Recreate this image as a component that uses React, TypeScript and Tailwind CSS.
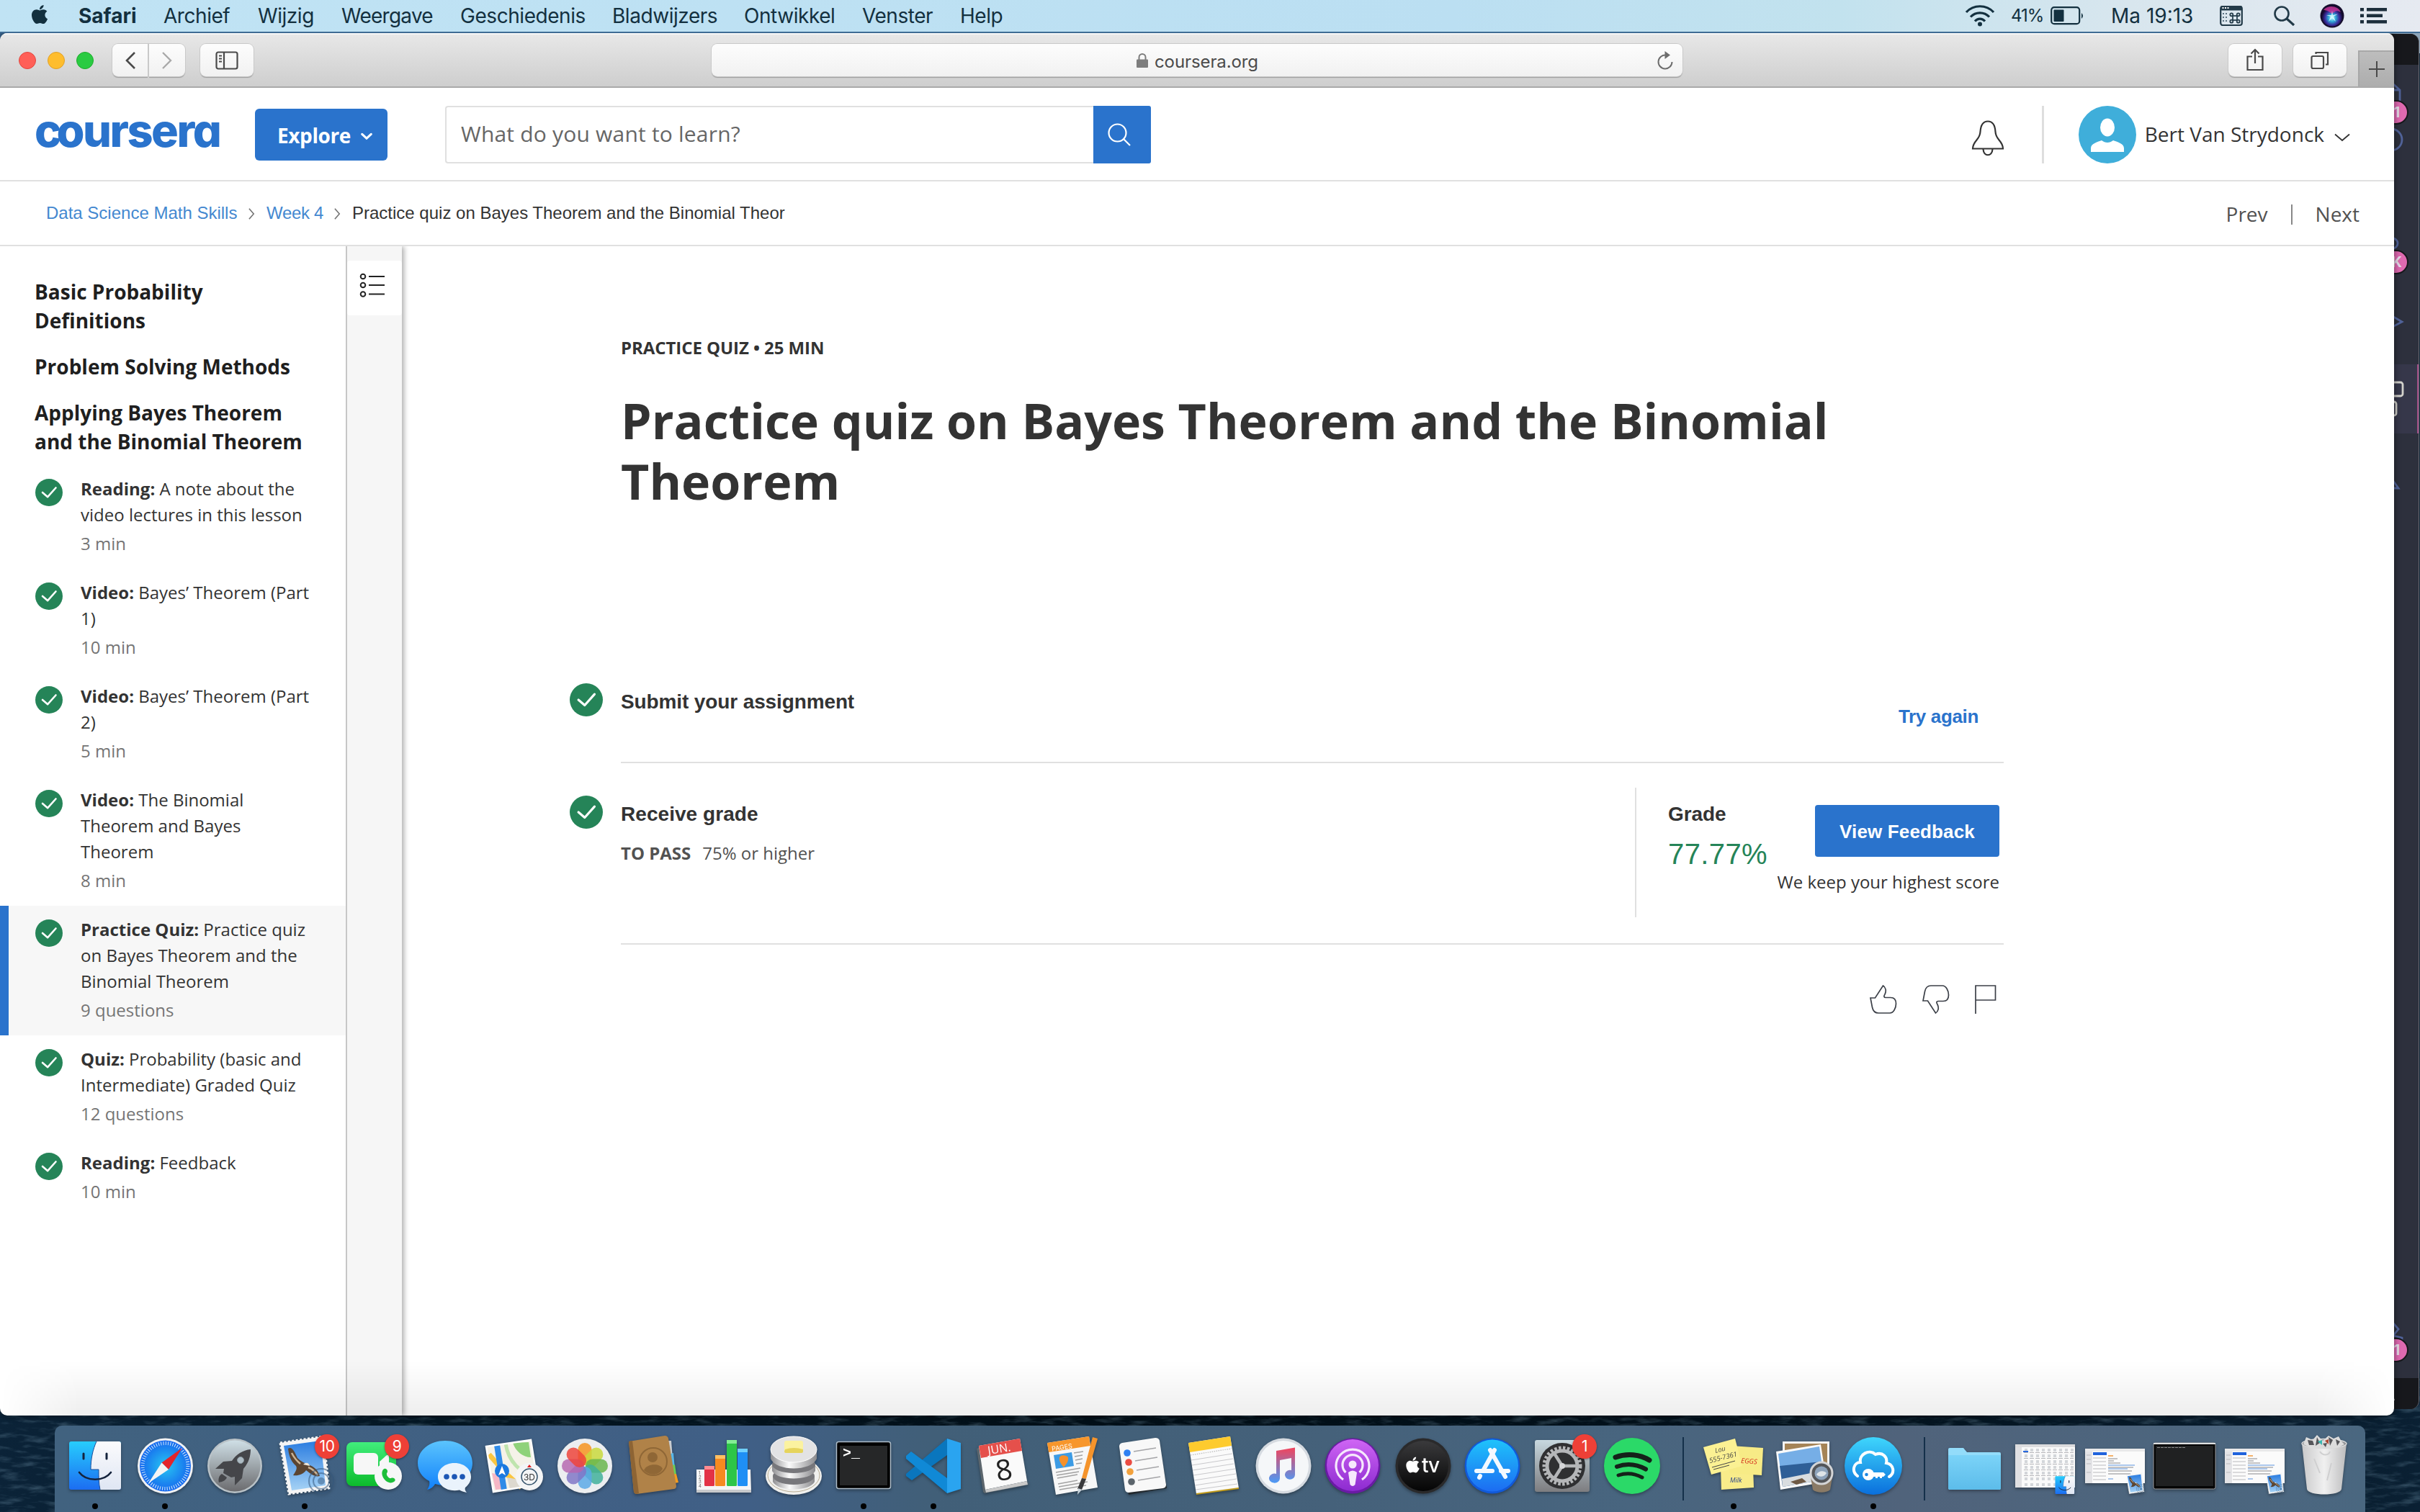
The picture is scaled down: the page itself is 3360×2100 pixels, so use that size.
import type { ReactNode } from "react";
import { FaApple } from "react-icons/fa";

const OS = "font-['Open_Sans',sans-serif]";
const HV = "font-['Liberation_Sans',Arial,sans-serif]";
const UI = "font-['Inter',sans-serif]";

/* ---------- menu bar ---------- */

const menus: [string, string][] = [
  ["Safari", "w-[118px] font-bold"],
  ["Archief", "w-[131px] tracking-[-0.45px]"],
  ["Wijzig", "w-[116px] tracking-[-0.45px]"],
  ["Weergave", "w-[165px] tracking-[-0.75px]"],
  ["Geschiedenis", "w-[211px] tracking-[-0.45px]"],
  ["Bladwijzers", "w-[183px] tracking-[-0.45px]"],
  ["Ontwikkel", "w-[164px] tracking-[-0.45px]"],
  ["Venster", "w-[136px] tracking-[-0.45px]"],
  ["Help", "w-[80px] tracking-[-0.45px]"],
];

function MenuBar() {
  return (
    <div className={`relative z-20 flex h-[46px] shrink-0 items-center border-b-2 border-[#3f6c94] bg-[linear-gradient(90deg,#c0e3f4_0%,#bbdff2_60%,#c2e2ee_76%,#d8e6ee_88%,#e6eaf1_100%)] text-[28px] leading-[44px] text-[#13303f] ${UI}`}>
      <FaApple className="ml-[40px] size-[30px] -translate-y-[2px]" />
      <div className="ml-[39px] flex">
        {menus.map(([t, c]) => (
          <span key={t} className={c}>{t}</span>
        ))}
      </div>
      <svg viewBox="0 0 42 30" className="ml-auto h-[30px] w-[42px]" fill="none" stroke="#13303f" strokeWidth="3.2">
        <path d="M2 10 C12 -1 30 -1 40 10" />
        <path d="M8 16.5 C15 9 27 9 34 16.5" />
        <path d="M14 22.5 C18 18 24 18 28 22.5" />
        <circle cx="21" cy="26.5" r="3" fill="#13303f" stroke="none" />
      </svg>
      <span className="ml-[22px] w-[55px] text-[24px] tracking-[-1px]">41%</span>
      <svg viewBox="0 0 48 26" className="h-[26px] w-[48px]" fill="none">
        <rect x="1.2" y="1.2" width="39" height="23" rx="4" stroke="#13303f" strokeWidth="2.2" />
        <rect x="4.5" y="4.5" width="14" height="16.5" rx="1" fill="#13303f" />
        <path d="M43 9 Q47 13 43 17Z" fill="#13303f" />
      </svg>
      <span className="ml-[36px] w-[116px] whitespace-nowrap">Ma 19:13</span>
      <svg viewBox="0 0 32 30" className="ml-[35px] h-[30px] w-[32px]">
        <rect x="1.2" y="2" width="29.6" height="26" rx="3" fill="none" stroke="#223a48" strokeWidth="2.2" />
        <rect x="1" y="1" width="30" height="6.5" rx="2" fill="#223a48" />
        <g fill="#fff"><rect x="3.5" y="3" width="2" height="2" /><rect x="7" y="3" width="2" height="2" /><rect x="10.500" y="3" width="2" height="2" /></g>
        <g fill="none" stroke="#223a48" strokeWidth="1.7">
          <rect x="18" y="15" width="6" height="6" />
          <circle cx="16.300" cy="13.300" r="2" /><circle cx="25.700" cy="13.300" r="2" /><circle cx="16.300" cy="22.700" r="2" /><circle cx="25.700" cy="22.700" r="2" />
        </g>
        <g fill="#5a7180"><rect x="4" y="11" width="2" height="2" /><rect x="8" y="11" width="2" height="2" /><rect x="4" y="16" width="2" height="2" /><rect x="8" y="16" width="2" height="2" /><rect x="4" y="21" width="2" height="2" /><rect x="8" y="21" width="2" height="2" /></g>
      </svg>
      <svg viewBox="0 0 30 28" className="ml-[43px] h-[28px] w-[30px]" fill="none" stroke="#223a48" strokeWidth="2.6">
        <circle cx="11" cy="11" r="9.500" /><path d="M18 18 L28 27" strokeWidth="3.2" />
      </svg>
      <svg viewBox="0 0 34 34" className="ml-[34px] h-[34px] w-[34px]">
        <defs>
          <radialGradient id="siri" cx=".5" cy=".6" r=".5"><stop offset="0" stopColor="#c9fbff" /><stop offset=".35" stopColor="#2fa9d8" /><stop offset=".7" stopColor="#3a2a9a" /><stop offset="1" stopColor="#120a2e" /></radialGradient>
        </defs>
        <circle cx="17" cy="17" r="16.500" fill="#150d2c" />
        <circle cx="17" cy="17" r="14.500" fill="url(#siri)" />
        <path d="M5 9 C11 1 26 3 29 12 C24 9 20 10 17 15 C14 11 9 9 5 9Z" fill="#d0379c" opacity=".8" />
        <path d="M17 10 L18 16 L25 14.500 L19 18 L22 25 L17 20 L12 25 L15 18 L9 16 L16 16Z" fill="#d6fdff" opacity=".85" />
      </svg>
      <svg viewBox="0 0 38 22" className="mr-[45px] ml-[22px] h-[22px] w-[38px]" fill="#1d2f3c">
        <rect x="0" y="0" width="5" height="4.500" /><rect x="9" y="0" width="28" height="4.500" />
        <rect x="0" y="8.500" width="5" height="4.500" /><rect x="9" y="8.500" width="22" height="4.500" />
        <rect x="0" y="17" width="5" height="4.500" /><rect x="9" y="17" width="28" height="4.500" />
      </svg>
    </div>
  );
}

/* ---------- safari toolbar ---------- */

const tbBtn =
  "flex h-[45px] items-center justify-center bg-gradient-to-b from-[#fdfdfd] to-[#f1f1f1] shadow-[0_0_0_1px_#c9c9c9,0_2px_1px_#9d9d9d]";

function Toolbar() {
  return (
    <div className="flex h-[76px] shrink-0 items-center border-b-2 border-[#a9a9a9] bg-gradient-to-b from-[#e8e8e8] to-[#cecece] pt-[1px] pl-[26px] shadow-[inset_0_2px_0_#f6f6f6]">
      <div className="flex gap-4">
        <span className="size-6 rounded-full border border-[#e2463f] bg-[#ff5f57]" />
        <span className="size-6 rounded-full border border-[#e0a028] bg-[#febd2e]" />
        <span className="size-6 rounded-full border border-[#1dac2b] bg-[#2acb42]" />
      </div>
      <div className="ml-[26px] flex gap-[2px]">
        <div className={`${tbBtn} w-[49px] rounded-l-[8px]`}>
          <svg viewBox="0 0 16 24" className="h-[24px] w-[16px]" fill="none" stroke="#4a4a4a" strokeWidth="2.6"><path d="M14 1 L3 12 L14 23" /></svg>
        </div>
        <div className={`${tbBtn} w-[50px] rounded-r-[8px]`}>
          <svg viewBox="0 0 16 24" className="h-[24px] w-[16px]" fill="none" stroke="#a9a9a9" strokeWidth="2.4"><path d="M2 1 L13 12 L2 23" /></svg>
        </div>
      </div>
      <div className={`${tbBtn} ml-[21px] w-[74px] rounded-[8px]`}>
        <svg viewBox="0 0 32 26" className="h-[26px] w-[32px]" fill="none" stroke="#4a4a4a" strokeWidth="2.2">
          <rect x="1.500" y="1.500" width="29" height="23" rx="2.500" /><path d="M12 2 V24" /><path d="M5 6.500 H9 M5 10.500 H9 M5 14.500 H9" strokeWidth="1.800" />
        </svg>
      </div>
      <div className={`${tbBtn} ml-[636px] w-[1348px] rounded-[8px] text-[24px] text-[#4b4b4b] ${UI}`}>
        <div className="w-[590px]" />
        <svg viewBox="0 0 16 20" className="h-[20px] w-[16px]"><rect x="0" y="8.500" width="16" height="11.500" rx="1" fill="#7d7d7d" /><path d="M3.500 9 V5.500 a4.500 4.500 0 0 1 9 0 V9" fill="none" stroke="#7d7d7d" strokeWidth="2" /></svg>
        <span className="ml-[9px] w-[144px] translate-y-[2px] tracking-[-0.1px]">coursera.org</span>
        <svg viewBox="0 0 24 28" className="mr-[12px] ml-auto h-[28px] w-[24px]" fill="none" stroke="#6d6d6d" strokeWidth="2">
          <path d="M13 6.500 A9.500 9.500 0 1 0 21.500 16" /><path d="M11.500 1 L19 6.500 L11.500 12Z" fill="#6d6d6d" stroke="none" />
        </svg>
      </div>
      <div className={`${tbBtn} ml-[758px] w-[74px] rounded-[8px]`}>
        <svg viewBox="0 0 24 32" className="h-[32px] w-[24px] -translate-y-[1px]" fill="none" stroke="#4a4a4a" strokeWidth="2.2">
          <path d="M8 11.500 H1.500 V30 H22.500 V11.500 H16" /><path d="M12 21 V2" /><path d="M6.500 7.500 L12 2 L17.500 7.500" />
        </svg>
      </div>
      <div className={`${tbBtn} ml-[16px] w-[74px] rounded-[8px]`}>
        <svg viewBox="0 0 26 26" className="h-[26px] w-[26px]" fill="none" stroke="#4a4a4a" strokeWidth="2.2">
          <rect x="1.500" y="7" width="16.500" height="17" rx="2" /><path d="M7.500 4 V2 H24 V18.500 H21" />
        </svg>
      </div>
      <div className="ml-auto flex h-[50px] w-[50px] items-center justify-center self-end border-t-2 border-l-2 border-[#a8a8a8] bg-gradient-to-b from-[#bdbdbd] to-[#adadad]">
        <svg viewBox="0 0 22 22" className="size-[22px]" stroke="#4a4a4a" strokeWidth="2"><path d="M11 0 V22 M0 11 H22" /></svg>
      </div>
    </div>
  );
}

/* ---------- coursera page ---------- */

function Header() {
  return (
    <div className={`flex h-[130px] shrink-0 items-center border-b-2 border-[#e0e0e0] pt-[1px] pl-[48px] text-[28px] text-[#333] ${OS}`}>
      <span className="w-[270px] -translate-y-[5px] font-['Inter',sans-serif] text-[63px] leading-none font-extrabold tracking-[-2.500px] text-[#2a73cc] [font-feature-settings:'cv11']">
        <span className="tracking-[-7px]">c</span>oursera
      </span>
      <div className="ml-[36px] flex h-[72px] w-[184px] items-center rounded-[6px] bg-[#2a73cc] pl-[31px] text-[28px] font-bold tracking-[-0.4px] text-white">
        <span className="translate-y-[1px]">Explore</span>
        <svg viewBox="0 0 18 11" className="ml-[14px] h-[11px] w-[16px] translate-y-[3px]" fill="none" stroke="#fff" strokeWidth="3.500" strokeLinecap="round"><path d="M2 2 L9 8.500 L16 2" /></svg>
      </div>
      <div className="ml-[80px] flex h-[80px] w-[980px]">
        <div className="flex flex-1 items-center rounded-l-[4px] border-2 border-r-0 border-[#e0e0e0] pb-[2px] pl-[20px] text-[30px] tracking-[0.2px] text-[#666]">What do you want to learn?</div>
        <div className="flex w-[80px] items-center justify-center rounded-r-[3px] bg-[#2a73cc] pr-[8px]">
          <svg viewBox="0 0 32 32" className="size-[32px]" fill="none" stroke="#fff" strokeWidth="2.200"><circle cx="13.500" cy="13.500" r="12" /><path d="M22 22 L31 31" /></svg>
        </div>
      </div>
      <svg viewBox="0 0 46 50" className="ml-auto h-[50px] w-[46px] translate-y-[5px]" fill="none" stroke="#333" strokeWidth="2.200">
        <path d="M23 1.500 C15 1.500 13 8 12.500 16 C12 28 2 28 2 39.500 H44 C44 28 34 28 33.500 16 C33 8 31 1.500 23 1.500Z" />
        <path d="M16.500 40 C17 51 29 51 29.500 40" />
      </svg>
      <div className="ml-[52px] h-[80px] w-[3px] bg-[#dedede]" />
      <svg viewBox="0 0 80 80" className="ml-[48px] size-[80px]">
        <circle cx="40" cy="40" r="40" fill="#3faeda" />
        <ellipse cx="40" cy="30" rx="10" ry="12.500" fill="#fff" />
        <path d="M17 64 V59 C17 52 27 50 32 48 C37 52 43 52 48 48 C53 50 63 52 63 59 V64Z" fill="#fff" />
      </svg>
      <span className="-mt-[1px] ml-[12px]">Bert Van Strydonck</span>
      <svg viewBox="0 0 22 12" className="mr-[61px] ml-[14px] h-[12px] w-[22px] translate-y-[4px]" fill="none" stroke="#333" strokeWidth="1.800"><path d="M1 1.500 L11 10 L21 1.500" /></svg>
    </div>
  );
}

function Crumb() {
  return (
    <svg viewBox="0 0 10 18" className="mr-[16px] ml-[15px] h-[18px] w-[9px] translate-y-[1px]" fill="none" stroke="#757575" strokeWidth="1.800"><path d="M1 1 L8 9 L1 17" /></svg>
  );
}

function Breadcrumbs() {
  return (
    <div className="flex h-[90px] shrink-0 items-center border-b-2 border-[#e0e0e0] pb-[1px]">
      <div className={`flex items-center text-[24px] whitespace-nowrap text-[#4488d0] ${HV}`}>
        <span className="ml-[64px] w-[266px]">Data Science Math Skills</span>
        <Crumb />
        <span className="w-[79px] tracking-[-0.3px]">Week 4</span>
        <Crumb />
        <span className="text-[#333]">Practice quiz on Bayes Theorem and the Binomial Theor</span>
      </div>
      <div className={`mr-[48px] ml-auto flex items-center text-[28px] text-[#525252] ${OS}`}>
        <span className="translate-y-[1px]">Prev</span>
        <span className="mx-[32px] h-[28px] w-[2px] translate-y-[2px] bg-[#888]" />
        <span className="translate-y-[1px]">Next</span>
      </div>
    </div>
  );
}

function Check({ className }: { className: string }) {
  return (
    <svg viewBox="0 0 38 38" className={className}>
      <circle cx="19" cy="19" r="19" fill="#258458" />
      <path d="M10 19 L17.200 25.200 L28.500 12.500" fill="none" stroke="#fff" strokeWidth="2.600" strokeLinecap="round" strokeLinejoin="round" />
    </svg>
  );
}

const items = [
  { kind: "Reading", lines: ["A note about the", "video lectures in this lesson"], meta: "3 min" },
  { kind: "Video", lines: ["Bayes’ Theorem (Part", "1)"], meta: "10 min" },
  { kind: "Video", lines: ["Bayes’ Theorem (Part", "2)"], meta: "5 min" },
  { kind: "Video", lines: ["The Binomial", "Theorem and Bayes", "Theorem"], meta: "8 min" },
  { kind: "Practice Quiz", lines: ["Practice quiz", "on Bayes Theorem and the", "Binomial Theorem"], meta: "9 questions", active: true },
  { kind: "Quiz", lines: ["Probability (basic and", "Intermediate) Graded Quiz"], meta: "12 questions" },
  { kind: "Reading", lines: ["Feedback"], meta: "10 min" },
];

function Sidebar() {
  return (
    <aside className={`w-[482px] shrink-0 border-r-2 border-[#c7c7c7] pt-[43px] ${OS}`}>
      <div className="flex flex-col gap-6 pl-[48px] text-[28px] leading-[40px] font-bold text-[#1f1f1f]">
        <h2>Basic Probability<br />Definitions</h2>
        <h2>Problem Solving Methods</h2>
        <h2>Applying Bayes Theorem<br />and the Binomial Theorem</h2>
      </div>
      <ul className="mt-[13px] text-[24px] leading-[36px] text-[#333]">
        {items.map((it, i) => (
          <li key={i} className={it.active ? "flex border-l-[12px] border-[#2a73cc] bg-[#f7f7f7] pt-[15px] pb-[17px] pl-[37px]" : "flex pt-[15px] pb-[17px] pl-[49px]"}>
            <Check className="mt-[4px] size-[38px]" />
            <div className="ml-[25px] whitespace-nowrap">
              <b>{it.kind}:</b>{" "}
              {it.lines.map((l, j) => (
                <span key={j}>{j > 0 && <br />}{l}</span>
              ))}
              <div className="mt-1 text-[#757575]">{it.meta}</div>
            </div>
          </li>
        ))}
      </ul>
    </aside>
  );
}

function Rail() {
  return (
    <div className="relative w-[76px] shrink-0 bg-[#f6f6f6] pt-[20px] shadow-[3px_0_7px_rgba(0,0,0,0.32)] [clip-path:inset(0_-20px_0_0)]">
      <div className="flex h-[76px] items-center justify-center rounded-[4px] bg-white">
        <svg viewBox="0 0 36 34" className="h-[34px] w-[36px] -translate-x-[3px] -translate-y-[4px]" fill="none" stroke="#222" strokeWidth="2">
          <circle cx="5" cy="5" r="3.300" /><circle cx="5" cy="17" r="3.300" /><circle cx="5" cy="29.500" r="3.300" />
          <path d="M13 5 H35 M13 17 H35 M13 29.500 H35" />
        </svg>
      </div>
    </div>
  );
}

const thumb = "M18.500 1 C22 3 23.500 8 21 13 C19 16 20 17.500 22 17.500 H29 C34 17.500 36.500 21 36.500 26 C36.500 32 33 39 28 39 H12 C7 39 4.500 36 3.500 31 L1 18 H7.500Z";

function Content() {
  return (
    <main className={`ml-[304px] flex w-[1920px] flex-col pt-[123px] text-[#333] ${OS}`}>
      <div className="text-[24px] leading-[36px] font-bold tracking-[-0.07px]">PRACTICE QUIZ • 25 MIN</div>
      <h1 className="mt-[41px] text-[68px] leading-[84px] font-bold">
        Practice quiz on Bayes Theorem and the Binomial<br />Theorem
      </h1>
      <section className="mt-[216px] -ml-[71px] flex h-[134px]">
        <Check className="mt-[23px] mr-[25px] size-[46px]" />
        <div className={`flex flex-1 justify-between border-b-2 border-[#e0e0e0] font-bold ${HV}`}>
          <h3 className="mt-[29px] text-[28px] leading-[40px] tracking-[-0.12px]">Submit your assignment</h3>
          <a className="mt-[49px] mr-[35px] text-[26px] leading-[40px] tracking-[-0.35px] text-[#2a73cc]">Try again</a>
        </div>
      </section>
      <section className="-ml-[71px] flex h-[252px]">
        <Check className="mt-[45px] mr-[25px] size-[46px]" />
        <div className="flex flex-1 border-b-2 border-[#e0e0e0]">
          <div className="mt-[51px] flex-1">
            <h3 className={`text-[28px] leading-[40px] font-bold tracking-[0.05px] ${HV}`}>Receive grade</h3>
            <p className="mt-[16px] text-[24px] leading-[36px] text-[#525252]"><b className="mr-[16px]">TO PASS</b>75% or higher</p>
          </div>
          <div className="mt-[34px] mr-[6px] flex h-[180px] w-[506px] justify-between border-l-2 border-[#e0e0e0] pl-[44px]">
            <div className={`w-[137px] pt-[17px] ${HV}`}>
              <h3 className="text-[28px] leading-[40px] font-bold tracking-[-0.1px]">Grade</h3>
              <p className="mt-[11px] text-[40px] leading-[48px] tracking-[0.4px] text-[#258458]">77.77%</p>
            </div>
            <div className="flex flex-col items-end pt-[24px]">
              <button className={`h-[72px] w-[256px] rounded-[4px] bg-[#2a73cc] pt-[2px] text-[26px] font-bold tracking-[0.15px] text-white ${HV}`}>View Feedback</button>
              <p className="mt-[17px] text-[24px] leading-[36px] whitespace-nowrap">We keep your highest score</p>
            </div>
          </div>
        </div>
      </section>
      <div className="mt-[56px] flex justify-end gap-[36px] pr-[10px]">
        <svg viewBox="0 0 38 40" className="h-[40px] w-[38px] translate-x-[2px]" fill="none" stroke="#3c4048" strokeWidth="1.700"><path d={thumb} /></svg>
        <svg viewBox="0 0 38 40" className="h-[40px] w-[38px] translate-x-[1px] -scale-y-100" fill="none" stroke="#3c4048" strokeWidth="1.700"><path d={thumb} /></svg>
        <svg viewBox="0 0 30 40" className="h-[40px] w-[30px]" fill="none" stroke="#3c4048" strokeWidth="1.700"><path d="M1 40 V1 H28.500 V21 H1" /></svg>
      </div>
    </main>
  );
}

/* ---------- dark editor window peeking out on the right ---------- */

const badge = "absolute right-[14px] flex h-[34px] w-[38px] items-center justify-end rounded-full border-2 border-[#17181c] bg-[#df69b0]";

function BackWindow() {
  return (
    <div className={`absolute top-[47px] right-[1px] h-[1910px] w-[300px] overflow-hidden rounded-[12px] border-r border-[#6a6c74] bg-[#2d303d] text-[20px] font-bold text-[#e6dcea] ${UI}`}>
      <div className="absolute inset-x-0 top-0 h-[43px] bg-[#17181c]" />
      <div className="absolute inset-x-0 bottom-0 h-[43px] bg-[#17181c]" />
      <div className="absolute top-[459px] right-0 h-[96px] w-full border-r-2 border-[#a04f86] bg-[#36374a]" />
      <svg viewBox="0 0 60 1910" className="absolute top-0 right-0 h-[1910px] w-[60px]" fill="none" stroke="#51639a" strokeWidth="2.800">
        <path d="M22 67 L34 78 V110 H20 M22 67 V78 H34" />
        <circle cx="22" cy="147" r="15" />
        <circle cx="24" cy="251" r="7" transform="translate(0 40)" />
        <path d="M20 390 L37 400 L20 409" />
        <path d="M20 614 L32 631 H20" />
        <path d="M18 1795 L26 1792 L32 1799 L25 1808 L37 1811 V1816" />
        <g stroke="#d3d2cc"><rect x="4" y="484" width="34" height="19" rx="3" /><rect x="4" y="511" width="25" height="19" rx="3" /></g>
        <path d="M22 1883 L27 1898 H20Z" fill="#c9c9c9" stroke="none" />
      </svg>
      <span className={`${badge} top-[92px] pr-[10px]`}>1</span>
      <span className={`${badge} top-[300px] pr-[7px]`}>K</span>
      <span className={`${badge} top-[1811px] pr-[10px]`}>1</span>
    </div>
  );
}

/* ---------- dock ---------- */

function Grad({ id, a, b }: { id: string; a: string; b: string }) {
  return (
    <linearGradient id={id} x1="0" y1="0" x2="0" y2="1"><stop offset="0" stopColor={a} /><stop offset="1" stopColor={b} /></linearGradient>
  );
}

function FinderFace() {
  return (
    <g>
      <defs><Grad id="fnA" a="#27cdfd" b="#1c6df2" /><Grad id="fnB" a="#fbfbfd" b="#dfe6f3" /></defs>
      <rect x="4" y="6" width="72" height="67" rx="3" fill="url(#fnA)" />
      <path d="M42 6 H73 Q76 6 76 9 V70 Q76 73 73 73 H47 C45 64 45 55 45 45 H34 C34 30 37 17 42 6Z" fill="url(#fnB)" />
      <path d="M42 6 C37 17 34 30 34 45 H45 C45 55 45 64 47 73" fill="none" stroke="#1b4f9a" strokeWidth="1" />
      <path d="M24 23 V30 M56 23 V30" stroke="#15233c" strokeWidth="3" strokeLinecap="round" />
      <path d="M18 49 C28 62 52 62 62 49" fill="none" stroke="#15233c" strokeWidth="2.600" strokeLinecap="round" />
    </g>
  );
}

function Stamp() {
  return (
    <g>
      <defs><Grad id="stm" a="#2a7ce0" b="#a5d2f5" /></defs>
      <path d="M6 8 L66 -1 L74 71 L18 79Z" fill="#f5f5f5" stroke="#f5f5f5" strokeWidth="3" strokeDasharray="3 2.500" />
      <path d="M11 12 L62 5 L69 67 L22 74Z" fill="url(#stm)" />
      <path d="M17 16 C22 12 26 20 30 29 C35 34 40 36 45 38 C52 41 58 44 61 54 C54 56 47 50 42 46 C38 52 30 54 24 53 C28 47 30 44 28 40 C20 33 18 24 17 16Z" fill="#5b4532" />
      <path d="M22 22 C25 28 29 33 34 37 M45 42 C50 44 55 48 58 53" stroke="#cbb394" strokeWidth="2.500" fill="none" />
      <path d="M38 38 C42 34 46 36 47 40Z" fill="#efe6d8" />
      <circle cx="63" cy="61" r="17" fill="none" stroke="#35587c" strokeOpacity=".55" strokeWidth="2" />
      <circle cx="63" cy="61" r="11" fill="none" stroke="#35587c" strokeOpacity=".55" strokeWidth="2" />
      <circle cx="63" cy="61" r="5" fill="#35587c" fillOpacity=".5" />
    </g>
  );
}

function MailThumb() {
  return (
    <g>
      <rect x="-1" y="16" width="83" height="48" fill="#fbfbfb" />
      <rect x="-1" y="16" width="83" height="4" fill="#e9e9ea" />
      <rect x="-1" y="20" width="10" height="44" fill="#e3e3e6" />
      <rect x="10" y="21" width="19" height="4" fill="#1f62dc" />
      <path d="M10 29 H28 M10 34 H28 M10 39 H28 M10 44 H28 M10 49 H28 M10 54 H28 M10 59 H28 M1 25 H7 M1 31 H7 M1 37 H7 M1 49 H7" stroke="#b9b9bd" strokeWidth="1" />
      <path d="M31 26 H38" stroke="#f09a3c" strokeWidth="1.500" />
      <path d="M31 30 H44 M31 33 H39 M31 36 H48 M31 42 H66 M31 47 H64 M31 51 H62" stroke="#8a8a8e" strokeWidth="1.200" />
      <path d="M31 39 H68 M31 44 H58 M31 58 H38" stroke="#5d93de" strokeWidth="1.200" />
      <g transform="translate(54 50) scale(.36)"><Stamp /></g>
    </g>
  );
}

type DockApp = { n: string; art: ReactNode; dot?: boolean; badge?: string };

const petals: [string, number][] = [
  ["#f7931e", 0], ["#c9d93a", 45], ["#67b54b", 90], ["#3faf9a", 135], ["#5aa8e6", 180], ["#8075c6", 225], ["#b667b0", 270], ["#ee4339", 315],
];

const mainApps: DockApp[] = [
  { n: "Finder", dot: true, art: <FinderFace /> },
  {
    n: "Safari", dot: true, art: (
      <g>
        <defs><radialGradient id="sfr"><stop offset="0" stopColor="#27c6f2" /><stop offset="1" stopColor="#1668ee" /></radialGradient></defs>
        <circle cx="40.500" cy="40" r="38.500" fill="#f0f1f3" /><circle cx="40.500" cy="40" r="35.500" fill="url(#sfr)" />
        <circle cx="40.500" cy="40" r="31.500" fill="none" stroke="#e8f6ff" strokeWidth="5" strokeDasharray="1 2.300" opacity=".9" />
        <path d="M64 15 L45 45 L35.500 35.500Z" fill="#e3242b" /><path d="M17 64 L35.500 35.500 L45 45Z" fill="#f4f4f4" />
      </g>
    ),
  },
  {
    n: "Launchpad", art: (
      <g>
        <defs><Grad id="lpd" a="#cfdfe6" b="#6b6b6e" /></defs>
        <circle cx="40" cy="40" r="38" fill="#b9c2c7" /><circle cx="40" cy="40" r="35.500" fill="url(#lpd)" />
        <path d="M62 17 C51 18 42 24 36 33 L24 34 L13 44 L25 44 L24 50 L35 56 L40 55 L40 67 L50 57 L52 44 C59 36 62 27 62 17Z" fill="#45464a" />
        <circle cx="48" cy="32" r="4.500" fill="#aebcc4" stroke="#8b989f" /><path d="M22 51 C17 54 17 60 18 63 C22 62 27 61 29 56Z" fill="#45464a" />
      </g>
    ),
  },
  { n: "Mail", dot: true, badge: "10", art: <Stamp /> },
  {
    n: "FaceTime", badge: "9", art: (
      <g>
        <defs><Grad id="fct" a="#41ee7c" b="#0dbb2c" /></defs>
        <rect x="1" y="7" width="69" height="61" rx="8" fill="url(#fct)" /><rect x="11" y="22" width="34" height="30" rx="6" fill="#f7f7f7" />
        <path d="M47 34 L57 25 Q60 24 60 28 V46 Q60 50 57 49 L47 41Z" fill="#f7f7f7" />
        <circle cx="59" cy="54" r="19" fill="#f6f7f8" />
        <path d="M52 45 C56 41 60 47 57 50 C56 53 60 58 63 57 C67 55 71 60 67 62 C58 68 46 53 52 45Z" fill="#1dbf3a" />
      </g>
    ),
  },
  {
    n: "Messages", art: (
      <g>
        <defs><Grad id="msg" a="#5bc4fd" b="#1181fb" /></defs>
        <path d="M41 5 C62 5 79 18 79 36 C79 54 62 67 41 67 C36 67 31 66 27 65 C25 69 21 72 16 73 C19 69 20 65 19 61 C9 56 3 47 3 36 C3 18 20 5 41 5Z" fill="url(#msg)" />
        <path d="M54 36 C67 36 77 44 77 55 C77 61 74 66 69 70 C68 72 69 75 71 77 C67 76 63 75 61 73.500 C44 77 31 67 31 55 C31 44 41 36 54 36Z" fill="#eaf3fc" />
        <g fill="#1c57b5"><circle cx="43" cy="55" r="3.800" /><circle cx="54" cy="55" r="3.800" /><circle cx="65" cy="55" r="3.800" /></g>
      </g>
    ),
  },
  {
    n: "Maps", art: (
      <g>
        <path d="M1 13 L63 4 L73 66 L11 76Z" fill="#f5f2e8" />
        <path d="M38 8 L60 7 L63 28 C52 28 42 20 38 8Z" fill="#8fd27a" /><path d="M28 9 C32 34 48 50 69 54" stroke="#bfe4ae" strokeWidth="5" fill="none" />
        <path d="M5 24 L12 32 L30 52 L50 70" stroke="#fbc63f" strokeWidth="7" fill="none" /><path d="M9 50 L14 73 L24 72 L20 52Z" fill="#f6b7c5" />
        <path d="M16 11 L26 74" stroke="#2f8be8" strokeWidth="8" /><path d="M30 56 L62 62 L64 67 L34 72Z" fill="#ddd9cf" />
        <path d="M1 13 L63 4 L73 66 L11 76Z" fill="none" stroke="#fff" strokeWidth="2.500" />
        <circle cx="23" cy="47" r="10" fill="#1a79e0" /><path d="M23 40 L28 53 L23 50 L18 53Z" fill="#fff" />
        <circle cx="61" cy="55" r="19" fill="#f4f5f6" /><circle cx="61" cy="55" r="11" fill="none" stroke="#38566e" strokeWidth="1.500" />
        <path d="M58 42 L61 38 L64 42Z" fill="#e02020" />
        <text x="61" y="59.500" textAnchor="middle" fontSize="12" fontFamily="Inter" fill="#333">3D</text>
      </g>
    ),
  },
  {
    n: "Photos", art: (
      <g>
        <circle cx="41" cy="40" r="38" fill="#eceef0" />
        {petals.map(([c, a]) => (
          <rect key={a} x="31.500" y="8" width="19" height="31" rx="9.500" fill={c} fillOpacity=".84" transform={`rotate(${a} 41 40)`} />
        ))}
      </g>
    ),
  },
  {
    n: "Contacts", art: (
      <g>
        <path d="M57 5 L64 5 L66 30 L60 31Z" fill="#c9ccd0" /><path d="M60 24 L67 22 L69 44 L62 45Z" fill="#59b7e8" /><path d="M62 40 L69 38 L71 52 L64 54Z" fill="#6ccf56" /><path d="M64 52 L71 51 L74 63 L68 64Z" fill="#f39c1f" />
        <path d="M5 6 L55 -2 Q59 -2 60 2 L71 68 Q71 71 68 72 L16 79 Q13 79 12 76Z" fill="#b08248" /><path d="M5 6 L10 5 L19 78 L16 79 Q13 79 12 76Z" fill="#8d6434" />
        <ellipse cx="39" cy="34" rx="19" ry="19" fill="none" stroke="#8f6736" strokeWidth="2" /><circle cx="38" cy="28" r="7" fill="#8f6736" /><path d="M26 46 C30 36 49 36 52 44 C47 54 33 54 26 46Z" fill="#8f6736" />
      </g>
    ),
  },
  {
    n: "Numbers", art: (
      <g>
        <path d="M2 45 H77 L78 76 H2Z" fill="#f5f5f6" /><path d="M2 73 H78 V77 H2Z" fill="#c7c9cc" />
        <g fontSize="6" fill="#666" fontFamily="Inter"><text x="5" y="52">1</text><text x="5" y="58">2</text><text x="5" y="64">3</text><text x="5" y="70">4</text></g>
        <rect x="13" y="40" width="14" height="28" rx="1.500" fill="#e33246" /><rect x="13" y="40" width="14" height="5" fill="#ff8b91" />
        <rect x="28" y="25" width="14" height="43" rx="1.500" fill="#f58a20" /><rect x="28" y="25" width="14" height="5" fill="#ffbf62" />
        <rect x="44" y="4" width="14" height="64" rx="1.500" fill="#2dc548" /><rect x="44" y="4" width="14" height="5" fill="#84ee95" />
        <rect x="59" y="16" width="14" height="52" rx="1.500" fill="#1f8ff5" /><rect x="59" y="16" width="14" height="5" fill="#6fd0ff" />
      </g>
    ),
  },
  {
    n: "Sequel", art: (
      <g>
        <defs><linearGradient id="cyl"><stop offset="0" stopColor="#8f8f92" /><stop offset=".4" stopColor="#fafafa" /><stop offset="1" stopColor="#8b8b8e" /></linearGradient></defs>
        <ellipse cx="40" cy="54" rx="39" ry="26" fill="#f0f0ee" /><ellipse cx="40" cy="53" rx="36" ry="23" fill="none" stroke="#b9ad94" strokeWidth="1" />
        <path d="M11 54 V62 C18 76 62 76 69 62 V54Z" fill="url(#cyl)" /><ellipse cx="40" cy="54" rx="29" ry="12" fill="#77777b" />
        <path d="M10 38 V47 C18 61 62 61 70 47 V38Z" fill="url(#cyl)" /><ellipse cx="40" cy="38" rx="30" ry="12" fill="#77777b" />
        <path d="M8 17 V30 C16 48 64 48 72 30 V17Z" fill="url(#cyl)" /><ellipse cx="40" cy="17" rx="32" ry="18" fill="#e3e3e4" stroke="#fff" />
        <rect x="27" y="5" width="26" height="16" rx="3" fill="#fbf2a0" /><path d="M28 17 Q40 13 53 17 V20 Q53 22 50 22 H30 Q27 22 27 20Z" fill="#e6d45c" />
      </g>
    ),
  },
  {
    n: "Terminal", dot: true, art: (
      <g>
        <rect x="2.500" y="6.500" width="75" height="65" rx="3" fill="#000" stroke="#aebdc9" strokeWidth="1.500" /><rect x="7" y="12" width="66" height="55" fill="#262728" />
        <text x="11" y="28" fontSize="20" fontWeight="700" fontFamily="Liberation Mono" fill="#fff">&gt;_</text>
      </g>
    ),
  },
  {
    n: "Code", dot: true, art: (
      <g>
        <path d="M59 2 L59 25 L10 60 L2 54 L2 51Z" fill="#0a76bd" /><path d="M9 20 L2 26 L2 30 L59 78 V57Z" fill="#1089d6" /><path d="M59 2 L78 8 V72 L59 78Z" fill="#2aa4f0" />
      </g>
    ),
  },
  {
    n: "Calendar", art: (
      <g>
        <path d="M3 16 L8 14 L17 76 L75 66 L73 60 L76 66 L14 78 L12 76Z" fill="#5c666d" /><path d="M6 12 L63 2 L73 61 L15 73Z" fill="#fafafa" /><path d="M15 73 L73 61 L74 66 L16 77Z" fill="#c9c9c9" />
        <path d="M6 12 L63 2 L66 19 L9 29Z" fill="#e5504b" />
        <g transform="rotate(-9 38 40)" fontFamily="Open Sans" textAnchor="middle"><text x="38" y="21.500" fontSize="16" fill="#fff">JUN.</text><text x="40" y="60" fontSize="40" fill="#222">8</text></g>
      </g>
    ),
  },
  {
    n: "Pages", art: (
      <g>
        <path d="M4 8 L62 -1 L74 70 L16 80Z" fill="#f7f7f7" /><path d="M4 8 L62 -1 L64 12 L6 21Z" fill="#f7962b" />
        <g transform="rotate(-9 20 14)"><text x="10" y="18" fontSize="9" fill="#fff" fontFamily="Inter">PAGES</text></g>
        <path d="M13 25 L38 21 L41 40 L16 44Z" fill="#3c9be4" /><path d="M21 28 C24 24 30 25 33 28 C34 34 30 38 27 42 C23 37 20 33 21 28Z" fill="#f6902a" />
        <path d="M41 22 L54 20 M42 27 L53 25 M43 32 L53 30 M44 37 L52 36 M16 49 L50 43 M17 53 L48 48 M18 57 L46 52 M19 65 L46 60 M20 69 L60 62 M21 73 L58 67" stroke="#a2a2a2" strokeWidth="1.300" />
        <path d="M67 0 L74 2 L58 58 L52 57Z" fill="#f5942c" /><path d="M52 57 L58 58 L52 73 L46 72Z" fill="#3a3a3c" /><path d="M47 71 L52 73 L46 80Z" fill="#c8d4dc" />
      </g>
    ),
  },
  {
    n: "Reminders", art: (
      <g transform="translate(2 1)">
        <path d="M10 12 L60 4 L71 70 L18 79 Z" fill="#22282d" /><path d="M9 7 L55 0 Q60 0 61 4 L70 65 Q70 69 66 70 L18 76 Q14 76 13 72 L5 12 Q5 8 9 7Z" fill="#f8f8f8" />
        <circle cx="16" cy="21" r="4.800" fill="#2f80f2" /><circle cx="18" cy="34" r="4.800" fill="#ea4c42" /><circle cx="20" cy="47" r="4.800" fill="#f2a13c" /><circle cx="22" cy="61" r="4.800" fill="#5b646b" />
        <path d="M25 19 L56 14 M27 32 L58 27 M29 45 L60 40 M31 59 L62 54" stroke="#a5a5a8" strokeWidth="1.500" />
      </g>
    ),
  },
  {
    n: "Notes", art: (
      <g>
        <path d="M6 8 L64 -1 L76 71 L17 79Z" fill="#fafafa" /><path d="M6 8 L64 -1 L66 12 L8 21Z" fill="#fdcb2e" />
        <path d="M9 25 L66 16" stroke="#bbb" strokeWidth="1.200" strokeDasharray="1.500 1.500" />
        <path d="M10 32 L67 23 M11 39 L68 30 M12 46 L69 37 M13 53 L71 44 M14 60 L72 51 M15 67 L73 58 M16 73 L74 65" stroke="#c9c9cc" strokeWidth="1" />
        <path d="M17 78 L76 70 V72 L17 80Z" fill="#c09b1c" />
      </g>
    ),
  },
  {
    n: "Music", art: (
      <g>
        <defs><Grad id="mus" a="#f2445c" b="#4a9bf8" /></defs>
        <circle cx="41" cy="40" r="38.500" fill="#d5dae0" /><circle cx="41" cy="40" r="35" fill="#f5f7f9" />
        <path d="M31 19 L57 14.500 V52 A7 6.500 0 1 1 52 46 V29 L36 32 V57 A7.500 6.500 0 1 1 31 51Z" fill="url(#mus)" />
      </g>
    ),
  },
  {
    n: "Podcasts", art: (
      <g>
        <defs><Grad id="pod" a="#cf65f4" b="#8d2bd0" /></defs>
        <circle cx="40" cy="40" r="38.500" fill="#6a1aa5" /><circle cx="40" cy="39" r="36" fill="url(#pod)" />
        <g fill="none" stroke="#f6e9fc" strokeWidth="3.200"><path d="M27 59 A23 23 0 1 1 53 59" /><path d="M30.500 49 A14 14 0 1 1 49.500 49" /></g>
        <circle cx="40" cy="38" r="5.500" fill="#f6e9fc" /><path d="M34 49 Q40 44 46 49 L43.500 66 Q40 70 36.500 66Z" fill="#f6e9fc" />
      </g>
    ),
  },
  {
    n: "TV", art: (
      <g>
        <defs><Grad id="atv" a="#3a3a3c" b="#050505" /></defs>
        <circle cx="41" cy="40" r="38.500" fill="#2a2a2b" /><circle cx="41" cy="40" r="35" fill="url(#atv)" />
        <FaApple x="14" y="26" color="#fff" size={25} /><text x="39" y="49" fontSize="28" fontFamily="Inter" fontWeight="500" letterSpacing="-1" fill="#fff">tv</text>
      </g>
    ),
  },
  {
    n: "App Store", art: (
      <g>
        <defs><Grad id="aps" a="#1fc3fb" b="#1c6cf2" /></defs>
        <circle cx="40" cy="40" r="38.500" fill="#1159d8" /><circle cx="40" cy="39.500" r="36" fill="url(#aps)" />
        <g stroke="#f3f9ff" strokeWidth="6" strokeLinecap="round" fill="none"><path d="M37 18 L58 55" /><path d="M43 18 L28 45" /><path d="M18 47 H40 M52 47 H62" /><path d="M23 54 L22 56" /></g>
      </g>
    ),
  },
  {
    n: "Settings", badge: "1", art: (
      <g>
        <defs><Grad id="set" a="#c7d8df" b="#7d7d80" /></defs>
        <rect x="2" y="4" width="76" height="72" rx="3" fill="url(#set)" /><circle cx="40" cy="40" r="32" fill="#2f3032" />
        <circle cx="40" cy="40" r="25" fill="none" stroke="#b4b6b8" strokeWidth="5" strokeDasharray="3.500 2.400" /><circle cx="40" cy="40" r="21" fill="none" stroke="#b4b6b8" strokeWidth="5" />
        <path d="M40 40 L28 21 M40 40 H62 M40 40 L28 59" stroke="#b4b6b8" strokeWidth="4.500" /><circle cx="40" cy="40" r="4" fill="#d5d6d8" />
      </g>
    ),
  },
  {
    n: "Spotify", art: (
      <g>
        <circle cx="40" cy="40" r="39" fill="#2bd968" />
        <g stroke="#15211a" fill="none" strokeLinecap="round"><path d="M17 28 C33 22 51 24 64 32" strokeWidth="7" /><path d="M19 41 C33 36 47 38 59 44.500" strokeWidth="6" /><path d="M21 53 C33 49 44 50.500 54 56" strokeWidth="5" /></g>
      </g>
    ),
  },
];

const sideApps: DockApp[] = [
  {
    n: "Stickies", dot: true, art: (
      <g>
        <path d="M22 42 H67 L68 70 L23 73Z" fill="#f8ec8a" /><path d="M36 12 L81 15 L79 53 L34 50Z" fill="#f7eb86" /><path d="M-2 14 L42 2 L52 40 L9 52Z" fill="#fbf193" />
        <g fontFamily="Open Sans" fontStyle="italic"><text x="15" y="22" fontSize="9" fill="#444" transform="rotate(-14 15 22)">Lou</text><text x="7" y="36" fontSize="9.500" fill="#444" transform="rotate(-14 7 36)">555-7361</text>
          <text x="50" y="36" fontSize="9.500" fill="#d42a1c" transform="rotate(4 50 36)">EGGS</text><text x="35" y="63" fontSize="9" fill="#24408a">Milk</text></g>
        <path d="M10 42 L42 33 M12 45 L34 39" stroke="#444" strokeWidth="1" />
      </g>
    ),
  },
  {
    n: "Preview", art: (
      <g>
        <path d="M11 6 H76 V60 H11Z" fill="#f4f4f4" /><path d="M14 9 H73 V57 H14Z" fill="#a58457" />
        <path d="M2 20 L64 10 L72 62 L8 73Z" fill="#fafafa" /><path d="M5 23 L62 13 L66 40 L8 46Z" fill="#76aee6" /><path d="M7 40 L65 34 L69 59 L11 69Z" fill="#2f5f97" /><path d="M10 58 L30 54 L50 50 L68 52 L69 59 L11 69Z" fill="#d9dde0" /><path d="M22 62 L38 57 L44 62 L30 66Z" fill="#6f5a45" />
        <path d="M50 56 L53 73 C58 78 72 78 77 73 L80 56Z" fill="#8a7a66" /><circle cx="65" cy="50" r="15" fill="#54565a" stroke="#d4d5d7" strokeWidth="3" /><circle cx="65" cy="50" r="9.500" fill="#8ea3bb" /><path d="M58 52 C61 46 69 46 72 50 C68 56 62 56 58 52Z" fill="#dfe4e8" />
      </g>
    ),
  },
  {
    n: "SafeInCloud", dot: true, art: (
      <g>
        <defs><Grad id="sic" a="#3fd6fc" b="#0a6fdc" /></defs>
        <circle cx="40" cy="40" r="40" fill="url(#sic)" />
        <path d="M18 54 C9 47 13 35 22 35 C20 24 34 16 43 24 C53 20 60 28 58 36 C69 38 70 50 62 55" fill="none" stroke="#fff" strokeWidth="4" strokeLinecap="round" />
        <circle cx="33" cy="52" r="8" fill="#fff" /><circle cx="30.500" cy="52" r="2.300" fill="#1a86e2" /><path d="M38 49 H54 L57 52 L54 55 H52 V57 H49 V55 H46 V57 H43 V55 H38Z" fill="#fff" />
      </g>
    ),
  },
];

const shelf: DockApp[] = [
  {
    n: "Folder", art: (
      <g>
        <defs><Grad id="fld" a="#7bd3f8" b="#5cbcea" /></defs>
        <path d="M3 17 Q3 15 5 15 H24 L29 21 H74 Q76 21 76 23 V70 Q76 73 74 73 H5 Q3 73 3 70Z" fill="#93dcfa" /><path d="M3 25 H76 V70 Q76 73 74 73 H5 Q3 73 3 70Z" fill="url(#fld)" />
      </g>
    ),
  },
  {
    n: "Finder window", art: (
      <g>
        <rect x="-1" y="10" width="83" height="60" fill="#fafafa" /><rect x="-1" y="10" width="83" height="4" fill="#dcdcde" /><rect x="-1" y="14" width="9" height="56" fill="#e0e0e3" />
        <path d="M12 18 H80 M12 26 H80 M12 34 H80 M12 42 H80 M12 50 H80 M12 58 H80 M12 66 H80" stroke="#d3d6da" strokeWidth="4" strokeDasharray="4 4" />
        <path d="M11 21.500 H80 M11 29.500 H80 M11 37.500 H80 M11 45.500 H80 M11 53.500 H80" stroke="#b5b5b9" strokeWidth="1" strokeDasharray="6 2" />
        <rect x="10" y="19" width="7" height="2" fill="#2b6be0" />
        <g transform="translate(53 52) scale(.37)"><FinderFace /></g>
      </g>
    ),
  },
  { n: "Mail window", art: <MailThumb /> },
  {
    n: "Terminal window", art: (
      <g><rect x="-3" y="8" width="86" height="64" rx="2.500" fill="#050505" stroke="#9a9a9c" strokeWidth="1" /><rect x="-3" y="8" width="86" height="2" fill="#dfe1e2" /><rect x="0" y="12" width="80" height="56" fill="#202122" /><path d="M2 14.500 H41" stroke="#8c8c8c" strokeWidth="1.200" strokeDasharray="4 1" /></g>
    ),
  },
  { n: "Mail window 2", art: <MailThumb /> },
  {
    n: "Trash", art: (
      <g>
        <defs><linearGradient id="trs"><stop offset="0" stopColor="#c9c9ca" /><stop offset=".5" stopColor="#f0f0f0" /><stop offset="1" stopColor="#bcbcbd" /></linearGradient></defs>
        <path d="M9 9 C18 16 62 16 71 9 L64 72 C63 82 17 82 16 72Z" fill="url(#trs)" />
        <ellipse cx="40" cy="9" rx="31" ry="6.500" fill="#8e9194" stroke="#d9dadb" strokeWidth="1.500" />
        <path d="M11 10 L15 0 L24 4 L30 -3 L38 5 L46 -2 L53 2 L60 -1 L64 6 L68 10 L58 15 H22Z" fill="#dcdcdc" />
        <path d="M17 4 L24 5 L26 11 L19 11Z M30 0 L34 8 L28 12Z M46 0 L52 4 L48 12Z M56 3 L62 6 L58 12Z M38 9 L44 8 L42 14Z" fill="#55565a" /><path d="M31 6 L37 4 L37 11Z" fill="#3bb7b0" /><path d="M41 5 L46 3 L46 10Z" fill="#b1452e" />
        <path d="M34 20 C38 26 46 26 48 20 M26 30 L34 50 M50 36 L44 60" stroke="#cfcfd0" strokeWidth="2" fill="none" />
      </g>
    ),
  },
];

function DockCell({ app }: { app: DockApp }) {
  return (
    <div className="relative flex h-[120px] w-[97px] justify-center pt-[16px]">
      <svg viewBox="0 0 80 80" className="size-[80px] overflow-visible drop-shadow-[0_2px_2px_rgba(0,0,0,0.35)]">{app.art}</svg>
      {app.badge && (
        <span className={`absolute top-[12px] left-[63px] flex size-[34px] items-center justify-center rounded-full bg-[#ee4037] text-[21px] tracking-[-0.5px] text-white shadow-[0_1px_3px_rgba(0,0,0,0.4)] ${UI}`}>{app.badge}</span>
      )}
      {app.dot && <span className="absolute bottom-[4px] left-[45px] size-2 rounded-full bg-black" />}
    </div>
  );
}

function Dock() {
  return (
    <div className="relative z-10 mt-[14px] ml-[76px] flex h-[120px] w-[3208px] rounded-t-[10px] bg-[linear-gradient(90deg,#41627f_0%,#405f86_30%,#415f78_38%,#45617a_55%,#48657f_68%,#50637b_80%,#4a6780_100%)] pl-[7px]">
      {mainApps.map((a) => <DockCell key={a.n} app={a} />)}
      <div className="mt-[16px] mr-[20px] ml-[22px] h-[88px] w-[2px] bg-[#14304a]" />
      {sideApps.map((a) => <DockCell key={a.n} app={a} />)}
      <div className="mt-[16px] mr-[20px] ml-[22px] h-[88px] w-[2px] bg-[#14304a]" />
      {shelf.map((a) => <DockCell key={a.n} app={a} />)}
    </div>
  );
}

function Sea() {
  return (
    <svg viewBox="0 0 3360 200" className="absolute bottom-0 left-0 h-[200px] w-[3360px]">
      <filter id="waves" x="0" y="0" width="100%" height="100%">
        <feTurbulence type="fractalNoise" baseFrequency="0.03 0.13" numOctaves="4" seed="7" />
        <feColorMatrix values="0 0 0 0 .25  0 0 0 0 .42  0 0 0 0 .55  2 0 0 0 -.95" />
      </filter>
      <rect width="3360" height="200" filter="url(#waves)" opacity=".38" />
    </svg>
  );
}

export default function App() {
  return (
    <div className="relative flex h-[2100px] w-[3360px] flex-col overflow-hidden bg-[linear-gradient(90deg,#0b2338_0%,#041724_18%,#020f18_45%,#03121d_75%,#0a2033_100%)]">
      <div className="absolute top-[44px] left-0 h-[30px] w-full bg-[linear-gradient(90deg,#3a6690,#3f6a94_90%,#8fa6ba)]" />
      <Sea />
      <BackWindow />
      <MenuBar />
      <div className="relative z-10 flex h-[1920px] w-[3324px] shrink-0 flex-col overflow-hidden rounded-[10px] bg-white shadow-[0_0_10px_rgba(0,0,0,0.55)]">
        <Toolbar />
        <Header />
        <Breadcrumbs />
        <div className="flex flex-1">
          <Sidebar />
          <Rail />
          <Content />
        </div>
        <div className="absolute right-0 bottom-0 left-0 h-[76px] bg-[linear-gradient(180deg,rgba(0,0,0,0),rgba(0,0,0,0.065))] [mask-image:linear-gradient(90deg,transparent,black_110px,black_3214px,transparent)]" />
      </div>
      <Dock />
    </div>
  );
}
